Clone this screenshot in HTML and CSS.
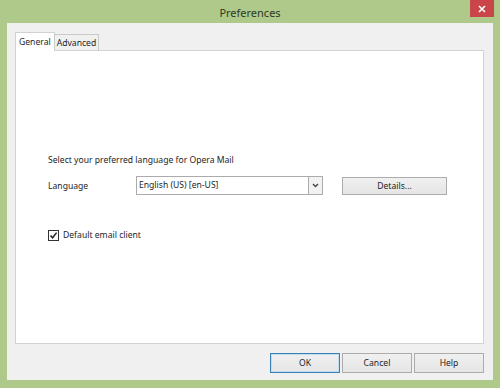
FILE: index.html
```html
<!DOCTYPE html>
<html>
<head>
<meta charset="utf-8">
<link rel="stylesheet" href="styles.css">
</head>
<body>
<div class="window">
  <div class="titlebar">
    <span class="title">Preferences</span>
    <span class="close"><svg width="8" height="8" viewBox="0 0 8 8"><path d="M1 1L7 7M7 1L1 7" stroke="#fff" stroke-width="1.6"/></svg></span>
  </div>
  <div class="client">
    <div class="tabs">
      <div class="tab active">General</div>
      <div class="tab">Advanced</div>
    </div>
    <div class="panel">
      <div class="content">
        <div class="intro">Select your preferred language for Opera Mail</div>
        <div class="langrow">
          <span class="label">Language</span>
          <div class="combo">
            <span class="combo-text">English (US) [en-US]</span>
            <span class="combo-btn"><svg width="7" height="5" viewBox="0 0 7 5"><path d="M1 1L3.5 3.5L6 1" fill="none" stroke="#444" stroke-width="1.4"/></svg></span>
          </div>
          <div class="btn details">Details...</div>
        </div>
        <div class="checkrow">
          <span class="checkbox"><svg width="9" height="9" viewBox="0 0 9 9"><path d="M1.5 4.5L3.6 6.8L7.6 1.6" fill="none" stroke="#222" stroke-width="1.5"/></svg></span>
          <span>Default email client</span>
        </div>
      </div>
    </div>
    <div class="buttons">
      <div class="btn default">OK</div>
      <div class="btn">Cancel</div>
      <div class="btn">Help</div>
    </div>
  </div>
</div>
</body>
</html>
```

FILE: styles.css
```css
html, body {
  margin: 0;
  padding: 0;
}
body {
  width: 500px;
  height: 388px;
  font-family: "Noto Sans", "Open Sans", sans-serif;
  font-size: 8.6px;
  color: #1e1e1e;
  overflow: hidden;
}
.window {
  width: 500px;
  height: 388px;
  box-sizing: border-box;
  background: #aec98a;
  padding: 0 7px 8px 7px;
  display: flex;
  flex-direction: column;
}
.titlebar {
  height: 23px;
  position: relative;
  display: flex;
  align-items: center;
  justify-content: center;
}
.title {
  font-size: 11px;
  color: #2d3a22;
  margin-top: 1px;
}
.close {
  position: absolute;
  right: -1px;
  top: 0;
  width: 24px;
  height: 17px;
  background: #c9454a;
  display: flex;
  align-items: center;
  justify-content: center;
}
.client {
  flex: 1;
  background: #f0f0f0;
  padding: 9px 9px 7px 8px;
  display: flex;
  flex-direction: column;
}
.tabs {
  display: flex;
  align-items: flex-end;
  height: 18px;
  position: relative;
  z-index: 1;
}
.tab {
  border: 1px solid #c9c9c9;
  border-bottom: none;
  background: #f0f0f0;
  height: 15px;
  line-height: 16px;
  padding: 0 2px;
  margin-left: -1px;
}
.tab:first-child {
  margin-left: 0;
}
.tab.active {
  background: #fff;
  height: 18px;
  line-height: 19px;
  padding: 0 3px 0 3px;
  margin-bottom: -1px;
  border-color: #d2d2d2;
}
.panel {
  flex: 1;
  background: #fff;
  border: 1px solid #d2d2d2;
}
.content {
  padding: 102px 0 0 32px;
}
.intro {
  height: 14px;
  line-height: 14px;
}
.langrow {
  display: flex;
  align-items: center;
  margin-top: 9px;
  height: 19px;
}
.label {
  width: 88px;
}
.combo {
  box-sizing: border-box;
  width: 187px;
  height: 19px;
  border: 1px solid #ababab;
  display: flex;
  align-items: stretch;
  background: #fff;
}
.combo-text {
  flex: 1;
  padding-left: 2px;
  line-height: 17px;
}
.combo-btn {
  width: 13px;
  border-left: 1px solid #ababab;
  background: #f2f2f2;
  display: flex;
  align-items: center;
  justify-content: center;
}
.btn {
  box-sizing: border-box;
  height: 20px;
  border: 1px solid #acacac;
  background: linear-gradient(#f0f0f0, #e5e5e5);
  display: flex;
  align-items: center;
  justify-content: center;
}
.details {
  width: 105px;
  height: 18px;
  margin-left: 19px;
}
.checkrow {
  display: flex;
  align-items: center;
  margin-top: 33px;
  height: 14px;
}
.checkbox {
  width: 11px;
  height: 11px;
  box-sizing: border-box;
  border: 1px solid #333;
  background: #fff;
  display: flex;
  align-items: center;
  justify-content: center;
  margin-right: 4px;
}
.buttons {
  display: flex;
  justify-content: flex-end;
  gap: 2px;
  margin-top: 9px;
  padding-right: 0;
}
.buttons .btn {
  width: 70px;
}
.buttons .btn.default {
  border-color: #3c7fb1;
  box-shadow: inset 0 0 0 1px #bfe0f4;
}
```
